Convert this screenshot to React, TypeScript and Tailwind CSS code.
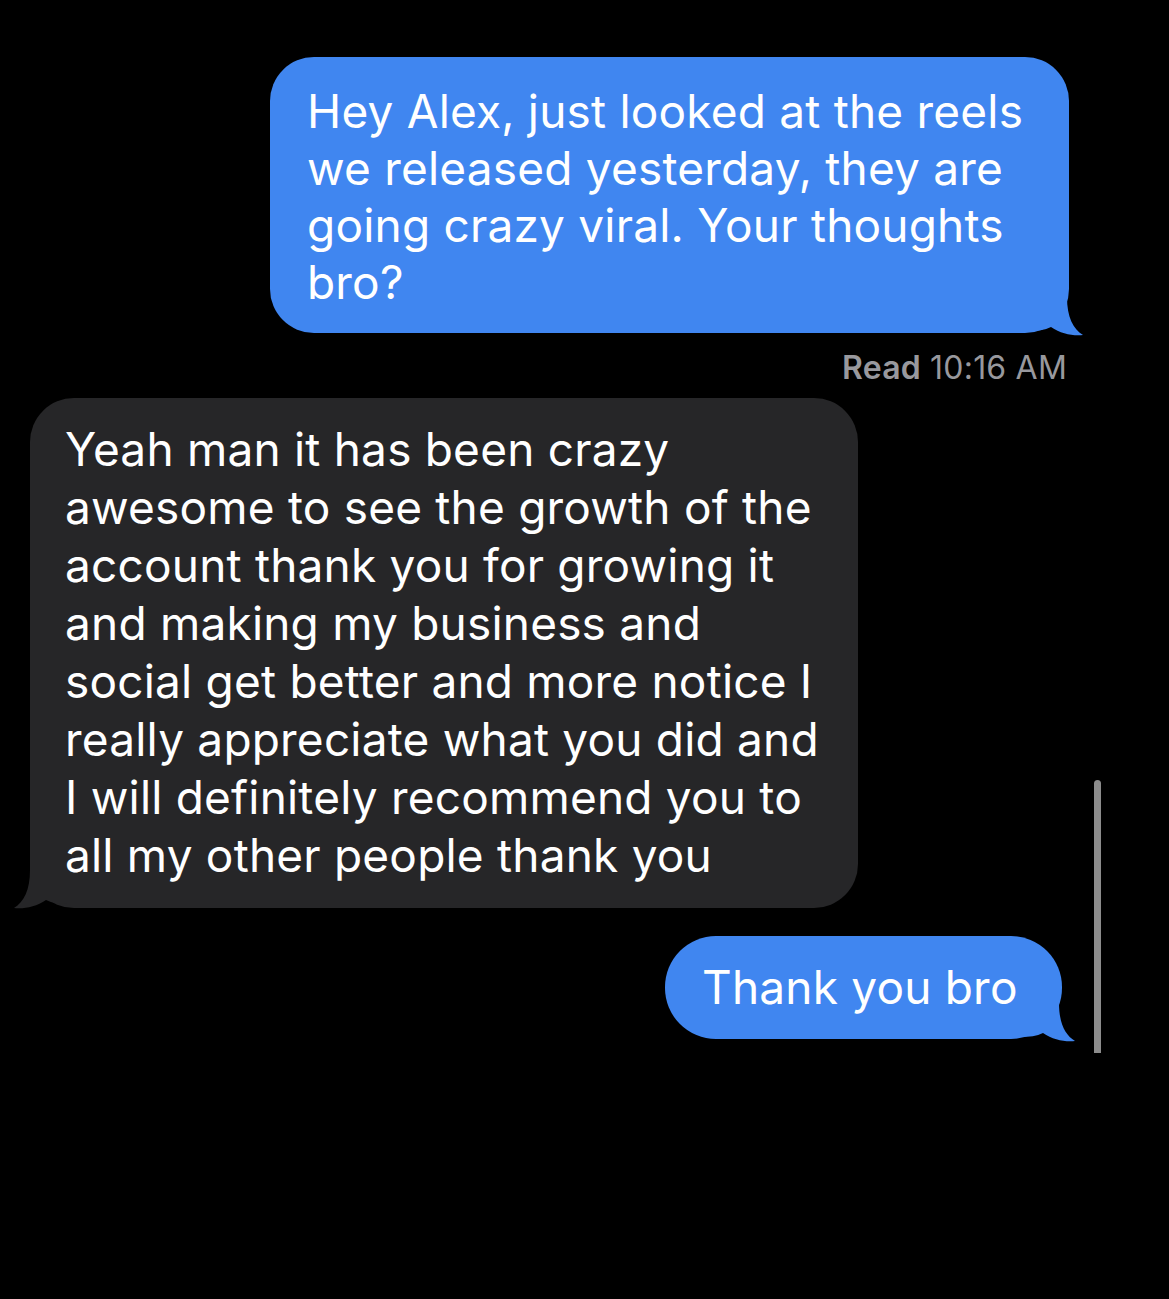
const outLines = [
  "Hey Alex, just looked at the reels",
  "we released yesterday, they are",
  "going crazy viral. Your thoughts",
  "bro?",
];

const inLines = [
  "Yeah man it has been crazy",
  "awesome to see the growth of the",
  "account thank you for growing it",
  "and making my business and",
  "social get better and more notice I",
  "really appreciate what you did and",
  "I will definitely recommend you to",
  "all my other people thank you",
];

// bubble tail, drawn for a right-side bubble; mirrored for the left one
function Tail({ color, className }: { color: string; className: string }) {
  return (
    <svg className={className} width="62" height="62" viewBox="0 0 62 62">
      <path
        d="M0 0 L44 0 L44 22 C44 42 50 54 60 60 C50 61 38 59 28 52 C22 55 14 56 6 56 L0 56 Z"
        fill={color}
      />
    </svg>
  );
}

export default function App() {
  const font = { fontFamily: "Inter, 'Noto Sans', sans-serif" };
  return (
    <div className="relative min-h-[1299px] w-full bg-black text-white" style={font}>
      <div className="flex flex-col pt-[57px]">
        {/* outgoing 1 */}
        <div className="relative ml-[270px] w-[799px] rounded-[44px] bg-[#4086f0] pl-[37px] pt-[26px] pb-[22px]">
          <Tail color="#4086f0" className="absolute -right-[16px] -bottom-[4px]" />
          <p className="relative text-[46px] leading-[57px] tracking-[0.2px] whitespace-nowrap">
            {outLines.map((l) => (
              <span key={l} className="block">{l}</span>
            ))}
          </p>
        </div>

        <div className="mr-[102px] mt-[18px] self-end text-[32px] leading-[34px] tracking-[0.2px] text-[#98989d]">
          <span className="font-semibold">Read</span> 10:16 AM
        </div>

        {/* incoming */}
        <div className="relative ml-[30px] mt-[13px] w-[828px] rounded-[44px] bg-[#262628] pl-[35px] pt-[22px] pb-[24px]">
          <Tail color="#262628" className="absolute -left-[18px] -bottom-[2px] -scale-x-100" />
          <p className="relative text-[46px] leading-[58px] tracking-[0.2px] whitespace-nowrap">
            {inLines.map((l) => (
              <span key={l} className="block">{l}</span>
            ))}
          </p>
        </div>

        {/* outgoing 2 */}
        <div className="relative ml-[665px] mt-[28px] flex h-[103px] w-[397px] items-center rounded-[51px] bg-[#4086f0] pl-[37px]">
          <Tail color="#4086f0" className="absolute -right-[15px] -bottom-[4px]" />
          <p className="relative text-[46px] leading-[57px] tracking-[0.2px]">Thank you bro</p>
        </div>
      </div>

      {/* scroll indicator */}
      <div className="absolute left-[1094px] top-[780px] h-[273px] w-[7px] rounded-t-full bg-[#8c8c8c]" />
    </div>
  );
}
